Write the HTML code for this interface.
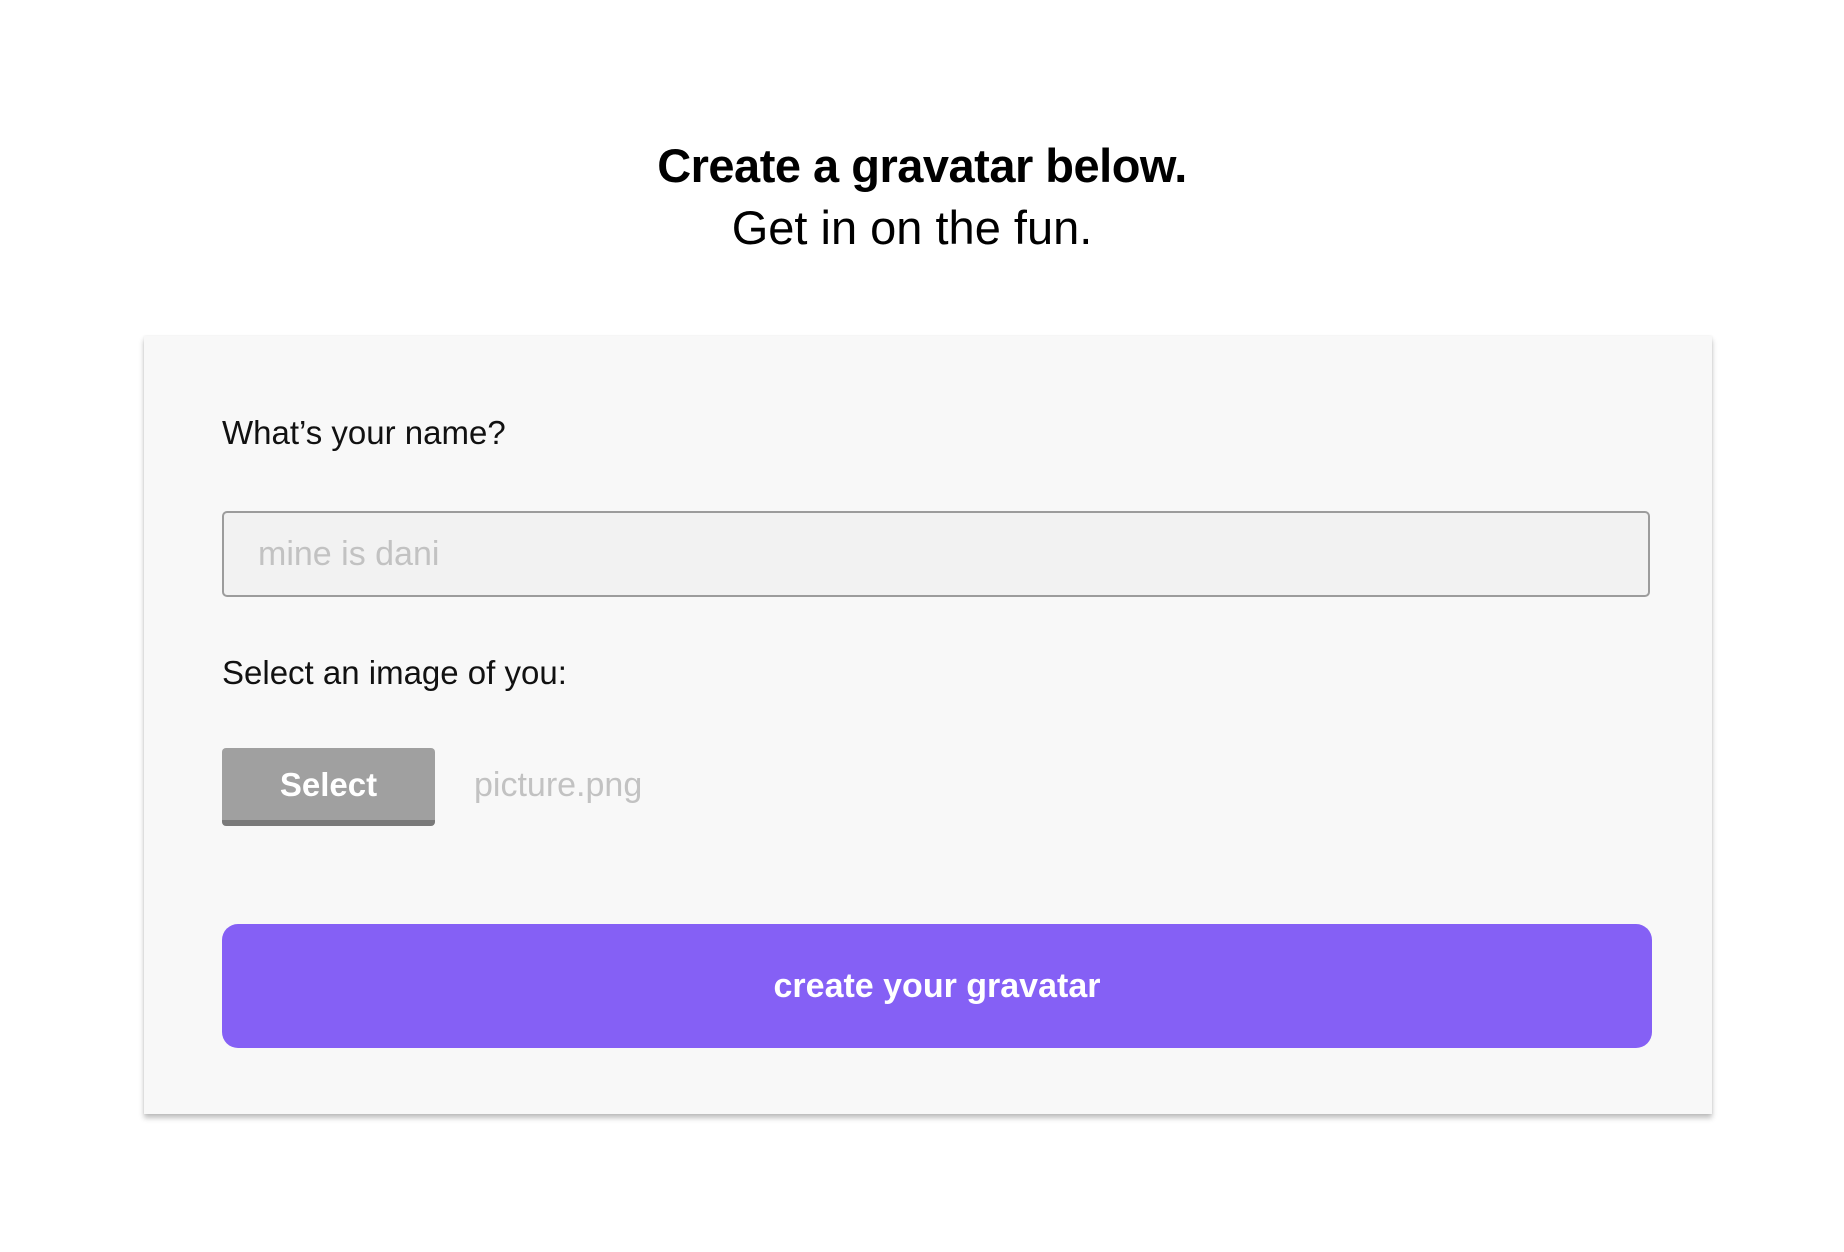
<!DOCTYPE html>
<html><head><meta charset="utf-8"><style>
body{margin:0;width:1844px;height:1252px;background:#fff;font-family:"Liberation Sans",sans-serif;position:relative;overflow:hidden}
.t1{position:absolute;top:138px;left:0;width:1844px;text-align:center;font-weight:bold;font-size:47px;color:#000;letter-spacing:-0.5px}
.t2{position:absolute;top:200px;left:-10px;width:1844px;text-align:center;font-size:47px;color:#000}
.card{position:absolute;left:144px;top:336px;width:1568px;height:778px;background:#f8f8f8;box-shadow:0 4px 5px rgba(0,0,0,.25),0 0 2px rgba(0,0,0,.08)}
.l{position:absolute;left:222px;font-size:33px;color:#111}
.inp{position:absolute;left:222px;top:511px;width:1428px;height:86px;border:2px solid #9c9c9c;border-radius:5px;background:#f2f2f2;box-sizing:border-box}
.inp span{position:absolute;left:34px;top:22px;font-size:34px;color:#c2c2c2}
.sel{position:absolute;left:222px;top:748px;width:213px;height:78px;background:#a0a0a0;border-radius:4px;border-bottom:6px solid #7a7a7a;box-sizing:border-box;color:#fff;font-weight:bold;font-size:33px;text-align:center;line-height:74px}
.pic{position:absolute;left:474px;top:766px;font-size:34px;color:#c2c2c2}
.btn{position:absolute;left:222px;top:924px;width:1430px;height:124px;background:#8560f5;border-radius:16px;color:#fff;font-weight:bold;font-size:34px;text-align:center;line-height:124px}
</style></head><body>
<div class="t1">Create a gravatar below.</div>
<div class="t2">Get in on the fun.</div>
<div class="card"></div>
<div class="l" style="top:414px">What’s your name?</div>
<div class="inp"><span>mine is dani</span></div>
<div class="l" style="top:654px">Select an image of you:</div>
<div class="sel">Select</div>
<div class="pic">picture.png</div>
<div class="btn">create your gravatar</div>
</body></html>
